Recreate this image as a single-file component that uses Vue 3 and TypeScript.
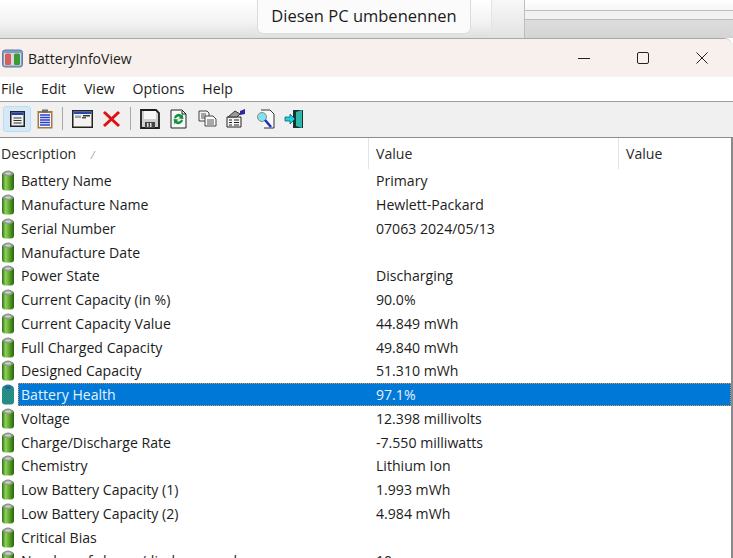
<script setup lang="ts">
interface Row { name: string; value: string; selected?: boolean }
const rows: Row[] = [
  { name: 'Battery Name', value: 'Primary' },
  { name: 'Manufacture Name', value: 'Hewlett-Packard' },
  { name: 'Serial Number', value: '07063 2024/05/13' },
  { name: 'Manufacture Date', value: '' },
  { name: 'Power State', value: 'Discharging' },
  { name: 'Current Capacity (in %)', value: '90.0%' },
  { name: 'Current Capacity Value', value: '44.849 mWh' },
  { name: 'Full Charged Capacity', value: '49.840 mWh' },
  { name: 'Designed Capacity', value: '51.310 mWh' },
  { name: 'Battery Health', value: '97.1%', selected: true },
  { name: 'Voltage', value: '12.398 millivolts' },
  { name: 'Charge/Discharge Rate', value: '-7.550 milliwatts' },
  { name: 'Chemistry', value: 'Lithium Ion' },
  { name: 'Low Battery Capacity (1)', value: '1.993 mWh' },
  { name: 'Low Battery Capacity (2)', value: '4.984 mWh' },
  { name: 'Critical Bias', value: '' },
  { name: 'Number of charge/discharge cycles', value: '10' },
]
const menus = ['File', 'Edit', 'View', 'Options', 'Help']
</script>

<template>
  <div class="screen">
    <svg class="defs" width="0" height="0">
      <defs>
        <linearGradient id="battGreen" x1="0" y1="0" x2="1" y2="0">
          <stop offset="0" stop-color="#2f6e14" />
          <stop offset="0.3" stop-color="#8fd158" />
          <stop offset="0.6" stop-color="#5ea82c" />
          <stop offset="1" stop-color="#28620f" />
        </linearGradient>
        <pattern id="battDither" width="2" height="2" patternUnits="userSpaceOnUse">
          <rect width="2" height="2" fill="#1c7fb0" />
          <rect width="1" height="1" fill="#2f9a5a" />
          <rect x="1" y="1" width="1" height="1" fill="#2f9a5a" />
        </pattern>
      </defs>
    </svg>
    <div class="desktop">
      <div class="desk-left">
        <button class="rename">Diesen PC umbenennen</button>
      </div>
      <div class="desk-panel"></div>
      <div class="desk-right">
        <div class="line-a"></div>
        <div class="line-b"></div>
      </div>
    </div>

    <div class="window">
      <div class="titlebar">
        <svg class="app-icon" width="21" height="19" viewBox="0 0 21 19">
          <rect x="0.500" y="1" width="20" height="17" rx="2.500" fill="#7f9fc4" stroke="#5c7ea8" />
          <rect x="2" y="4" width="17" height="12.500" fill="#d5d8dc" />
          <rect x="3" y="4.500" width="6" height="11.500" rx="1.500" fill="#d65f5f" />
          <rect x="12" y="4.500" width="6" height="11.500" rx="1.500" fill="#3f9a35" />
        </svg>
        <span class="title">BatteryInfoView</span>
        <div class="controls">
          <svg class="ctl" width="14" height="14" viewBox="0 0 14 14"><path d="M1 7.500h12" stroke="#222" stroke-width="1" fill="none" /></svg>
          <svg class="ctl" width="14" height="14" viewBox="0 0 14 14"><rect x="1.500" y="1.500" width="11" height="11" rx="1.500" stroke="#222" stroke-width="1" fill="none" /></svg>
          <svg class="ctl" width="14" height="14" viewBox="0 0 14 14"><path d="M1.500 1.500l11 11M12.500 1.500l-11 11" stroke="#222" stroke-width="1" fill="none" /></svg>
        </div>
      </div>

      <div class="menubar">
        <span v-for="m in menus" :key="m" class="menu">{{ m }}</span>
      </div>

      <div class="toolbar">
        <span class="tool active">
          <svg width="15" height="16" viewBox="0 0 15 16"><rect x="0.750" y="0.750" width="13.500" height="14.500" fill="#f0f0f0" stroke="#222" stroke-width="1.500" /><rect x="1.500" y="1.500" width="12" height="2.500" fill="#24409c" /><path d="M3.500 7h8M3.500 9.500h8M3.500 12h8" stroke="#333" /></svg>
        </span>
        <span class="tool">
          <svg width="16" height="20" viewBox="0 0 16 20"><rect x="0.500" y="2" width="15" height="17.500" fill="#a37a3c" /><rect x="2" y="4" width="12" height="14" fill="#f4f4ff" /><path d="M3 6h10M3 8.500h10M3 11h10M3 13.500h10M3 16h10" stroke="#2b3fd0" stroke-width="1.400" /><rect x="5" y="0.500" width="6" height="3" fill="#6a6a6a" /></svg>
        </span>
        <span class="sep"></span>
        <span class="tool wide">
          <svg width="21" height="18" viewBox="0 0 21 18"><rect x="0.750" y="0.750" width="19.500" height="16.500" fill="#f5f3ee" stroke="#222" stroke-width="1.500" /><rect x="1.500" y="1.500" width="18" height="2.500" fill="#2b4aa5" /><rect x="3" y="5.500" width="6" height="2.500" fill="#9aa4b8" /><rect x="11" y="5" width="7" height="1.500" fill="#333" /><rect x="10" y="7" width="4" height="1.500" fill="#555" /></svg>
        </span>
        <span class="tool x">
          <svg width="19" height="18" viewBox="0 0 19 18"><path d="M2 2l15 14M17 2L2 16" stroke="#e0110f" stroke-width="3" fill="none" /></svg>
        </span>
        <span class="sep"></span>
        <span class="tool">
          <svg width="20" height="20" viewBox="0 0 20 20"><path d="M1 1h15l3 3v15H1z" fill="#cfcfcf" stroke="#1c1c1c" stroke-width="1.800" /><rect x="4" y="2" width="12" height="8" fill="#f6f6f6" /><rect x="5" y="13" width="10" height="6" fill="#444" /><rect x="7" y="14" width="1.500" height="4" fill="#ddd" /><rect x="10" y="14" width="1.500" height="4" fill="#ddd" /></svg>
        </span>
        <span class="tool">
          <svg width="17" height="20" viewBox="0 0 17 20"><path d="M1 1h11l4 4v14H1z" fill="#f8f8f8" stroke="#222" /><path d="M12 2v3h4" fill="none" stroke="#222" /><path d="M4 9a4.500 4.500 0 0 1 7.500-3l1-1.500 1 5.500-5-.5 1.500-1.500A2.500 2.500 0 0 0 6 9.500z" fill="#12923a" /><path d="M13 11a4.500 4.500 0 0 1-7.500 3l-1 1.500-1-5.500 5 .5L7 12a2.500 2.500 0 0 0 4-1.500z" fill="#12923a" /></svg>
        </span>
        <span class="tool">
          <svg width="19" height="17" viewBox="0 0 19 17"><path d="M1 1h8l2 2v8H1z" fill="#f4f4f4" stroke="#444" /><path d="M3 4h5M3 6h5M3 8h5" stroke="#555" /><path d="M7 6h8l3 3v7H7z" fill="#fafafa" stroke="#444" /><path d="M9 10h7M9 12h7M9 14h7" stroke="#555" /></svg>
        </span>
        <span class="tool">
          <svg width="20" height="19" viewBox="0 0 20 19"><path d="M1 8h14v10H1z" fill="#f6f6f6" stroke="#222" /><path d="M3 11h3M8 11h5M3 13.500h3M8 13.500h5M3 16h3M8 16h5" stroke="#222" /><path d="M2 8l7-6 5 3-3 3z" fill="#9a9a9a" stroke="#333" /><path d="M14 2l5-2v5l-5 1z" fill="#2a2a9a" /></svg>
        </span>
        <span class="tool">
          <svg width="19" height="20" viewBox="0 0 19 20"><path d="M5 1h9l4 4v14H8" fill="#f8f8f8" stroke="#333" /><circle cx="6" cy="8" r="4.500" fill="#7fe3ea" stroke="#8a8a8a" /><path d="M9 11l6 7" stroke="#1c2fc0" stroke-width="2.500" /></svg>
        </span>
        <span class="tool">
          <svg width="20" height="20" viewBox="0 0 20 20"><rect x="9" y="1" width="10" height="18" fill="#1c2f33" /><path d="M12 3l6-2v18l-6-2z" fill="#2cb7a8" /><path d="M1 8h5V5l5 5-5 5v-3H1z" fill="#16d6e4" stroke="#0b4a60" stroke-width="0.700" /></svg>
        </span>
      </div>

      <div class="list">
        <div class="head">
          <div class="hcell c1">Description<span class="sort">⁄</span></div>
          <div class="hcell c2">Value</div>
          <div class="hcell c3">Value</div>
        </div>
        <div v-for="r in rows" :key="r.name" class="row">
          <svg class="batt" width="15" height="21" viewBox="0 0 15 21">
            <rect x="2" y="2" width="12" height="18.500" rx="3" :fill="r.selected ? 'url(#battDither)' : 'url(#battGreen)'" />
            <ellipse cx="8" cy="3.500" rx="5" ry="3" :fill="r.selected ? '#2f7f9a' : '#8e9a8a'" />
            <ellipse cx="8" cy="3.500" rx="3" ry="1.300" :fill="r.selected ? '#1c5f88' : '#c9d0c5'" />
          </svg>
          <div class="cells" :class="{ selected: r.selected }">
            <span class="cell-name">{{ r.name }}</span>
            <span class="cell-value">{{ r.value }}</span>
          </div>
        </div>
      </div>
    </div>
  </div>
</template>

<style>
html, body { margin: 0; overflow: hidden; background: #fff; }
</style>

<style scoped>
.defs { position: absolute; }
.screen {
  width: 733px;
  height: 558px;
  overflow: hidden;
  font-family: "Open Sans", "Noto Sans", sans-serif;
  color: #1c1c1c;
  background: #fff;
}
.desktop {
  height: 38px;
  display: flex;
  background: linear-gradient(#ffffff, #f2f2f2 60%, #dfdfdf);
}
.desk-left { width: 491px; flex: none; padding-left: 257px; box-sizing: border-box; }
.rename {
  display: block;
  width: 214px;
  height: 34px;
  padding: 0 0 3px;
  box-sizing: border-box;
  border: 1px solid #dcdcdc;
  border-top: 0;
  border-radius: 0 0 6px 6px;
  background: #fbfbfb;
  font: 16.500px "Open Sans", "Noto Sans", sans-serif;
  color: #1b1b1b;
}
.desk-panel {
  width: 34px;
  flex: none;
  border-left: 1px solid #e4e4e4;
  border-right: 1px solid #bdbdbd;
  box-sizing: border-box;
  background: linear-gradient(#f8f8f8, #e2e2e2);
}
.desk-right { flex: 1; display: flex; flex-direction: column; background: linear-gradient(#e6e6e6, #d4d4d4); }
.line-a { height: 10px; background: linear-gradient(#fff, #f6f6f6); border-bottom: 1px solid #bcbcbc; }
.line-b { height: 8px; background: #f1f1f1; border-bottom: 1px solid #bcbcbc; }

.window {
  height: 520px;
  border-top: 1px solid #a9a9a9;
  border-radius: 0 9px 0 0;
  box-sizing: border-box;
  overflow: hidden;
  background: #fff;
}
.titlebar {
  height: 38px;
  display: flex;
  align-items: center;
  padding: 0 0 0 2px;
  background: #f8f0ed;
}
.app-icon { flex: none; margin-right: 5px; }
.title { font-size: 14px; }
.controls { margin-left: auto; display: flex; padding-right: 24px; }
.ctl { width: 14px; margin-left: 45px; }
.ctl:first-child { margin-left: 0; }

.menubar {
  height: 25px;
  display: flex;
  align-items: center;
  background: #fff;
  border-bottom: 1px solid #a0a0a0;
  box-sizing: border-box;
  padding: 0 0 1px 1px;
  font-size: 14.100px;
}
.menu { margin-right: 17.800px; }

.toolbar {
  height: 36px;
  box-sizing: border-box;
  display: flex;
  align-items: center;
  padding: 0 0 2px 3px;
  background: #f0f0f0;
  border-bottom: 1px solid #8c8c8c;
}
.tool { display: flex; align-items: center; justify-content: center; width: 28.800px; height: 26px; flex: none; }
.tool.active {
  width: 28px;
  background: #d5e8f8;
  border: 1px solid #bcdcf4;
  border-radius: 3px;
  box-sizing: border-box;
}
.tool.active + .tool { width: 27px; }
.sep { width: 1px; height: 23px; background: #a8a8a8; margin: 0 5px 0 4px; flex: none; }

.list { border-right: 2px solid #8a8a8a; }
.head { display: flex; height: 31px; background: #fff; }
.hcell {
  box-sizing: border-box;
  height: 31px;
  line-height: 31px;
  font-size: 14.100px;
  padding-left: 7px;
  border-right: 1px solid #e3e3e3;
  color: #2a2a2a;
}
.c1 { width: 369px; padding-left: 1px; }
.c2 { width: 250px; }
.c3 { flex: 1; border-right: 0; }
.sort { margin-left: 16px; font-size: 10px; color: #888; }
.row {
  height: 23.750px;
  display: flex;
  align-items: center;
  font-size: 14.100px;
}
.batt { flex: none; margin: 0 3px 0 0; width: 15px; }
.cells {
  flex: 1;
  height: 23px;
  line-height: 24px;
  display: flex;
  padding-left: 3px;
  box-sizing: border-box;
}
.cells.selected {
  background: #0078d7;
  color: #e4f2fc;
  outline: 1px dotted #e89040;
  outline-offset: -1px;
}
.cell-name { width: 355px; flex: none; white-space: nowrap; }
.cell-value { flex: 1; white-space: nowrap; }
</style>
